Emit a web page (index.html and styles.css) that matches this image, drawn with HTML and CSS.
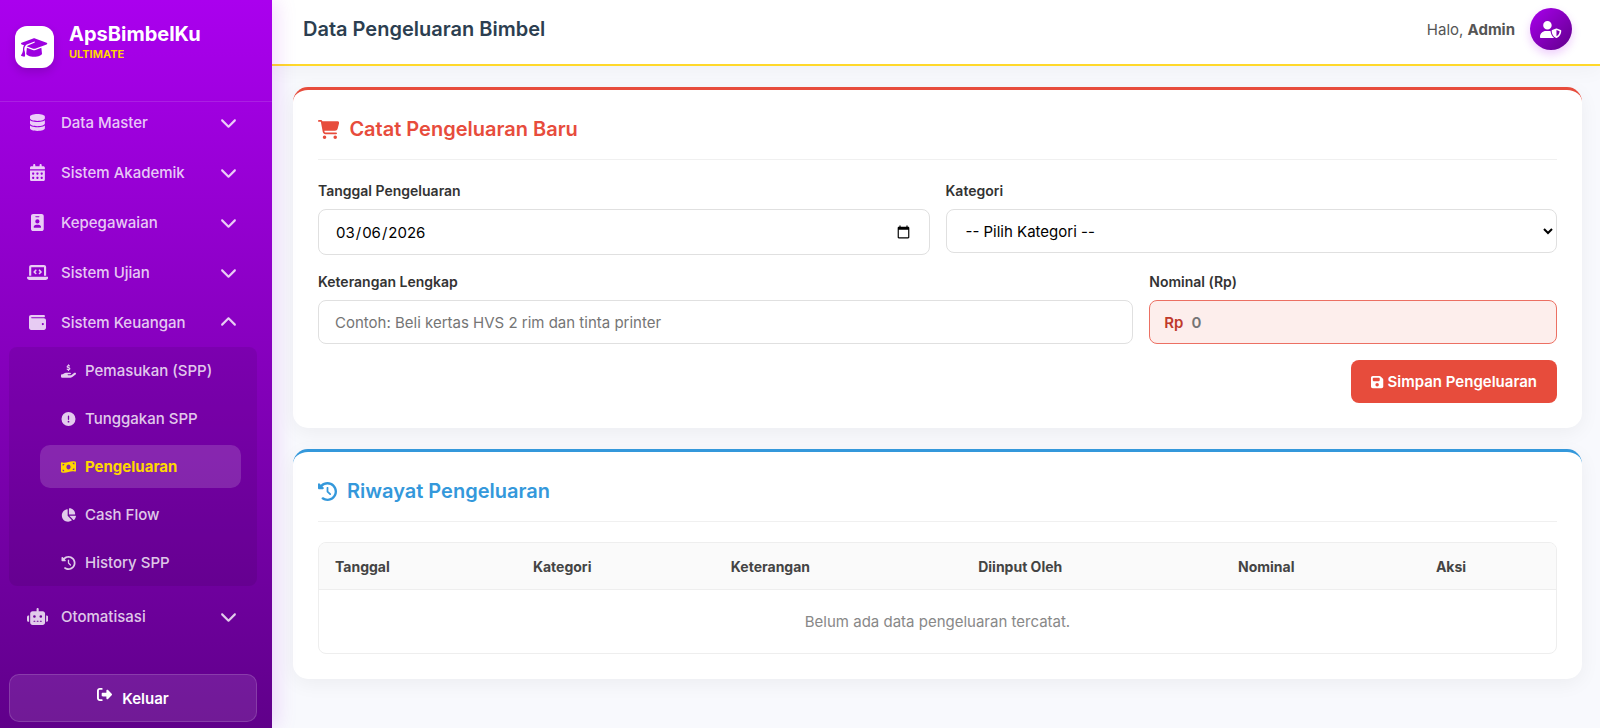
FILE: index.html
```html
<!DOCTYPE html>
<html lang="id">
<head>
    <meta charset="UTF-8">
    <meta name="viewport" content="width=device-width, initial-scale=1.0">
    <title>Data Pengeluaran Bimbel</title>
    <link rel="stylesheet" href="styles.css">
</head>
<body>
    <!-- Sidebar -->
    <aside class="sidebar">
        <div class="sidebar-header">
            <div class="logo-box">
                <svg class="icon" viewBox="0 0 640 512"><path d="M320 32c-8.1 0-16.1 1.4-23.7 4.1L15.8 137.4C6.3 140.9 0 149.9 0 160s6.3 19.1 15.8 22.6l57.9 20.9C57.3 229.3 48 259.8 48 291.9v28.1c0 28.4-10.8 57.7-22.3 80.8c-6.5 13-13.9 25.8-22.5 37.6C0 442.7-.9 448.3 .9 453.4s6 8.9 11.2 10.2l64 16c4.2 1.1 8.7 .3 12.4-2s6.3-6.1 7.1-10.4c8.6-42.8 4.3-81.2-2.1-108.7C90.3 344.3 86 329.8 80 316.5V291.9c0-30.2 10.2-58.7 27.9-81.5c12.9-15.5 29.6-28 49.2-35.7l157-61.7c8.2-3.2 17.5 .8 20.7 9s-.8 17.5-9 20.7l-157 61.7c-12.4 4.9-23.3 12.4-32.2 21.6l159.6 57.6c7.6 2.7 15.6 4.1 23.7 4.1s16.1-1.4 23.7-4.1L624.2 182.6c9.5-3.4 15.8-12.5 15.8-22.6s-6.3-19.1-15.8-22.6L343.7 36.1C336.1 33.4 328.1 32 320 32zM128 408c0 35.3 86 72 192 72s192-36.7 192-72L496.7 262.6 354.5 314c-11.1 4-22.8 6-34.5 6s-23.5-2-34.5-6L143.3 262.6 128 408z"/></svg>
            </div>
            <div class="brand">
                <span class="brand-name">ApsBimbelKu</span>
                <span class="brand-badge">ULTIMATE</span>
            </div>
        </div>

        <nav class="sidebar-menu">
            <button type="button" class="menu-item">
                <span class="menu-icon"><svg class="icon" viewBox="0 0 448 512"><path d="M448 80v48c0 44.2-100.3 80-224 80S0 172.2 0 128V80C0 35.8 100.3 0 224 0S448 35.8 448 80zM393.2 214.7c20.8-7.4 39.9-16.9 54.8-28.6V288c0 44.2-100.3 80-224 80S0 332.2 0 288V186.1c14.9 11.8 34 21.2 54.8 28.6C99.7 230.7 159.5 240 224 240s124.3-9.3 169.2-25.3zM0 346.1c14.9 11.8 34 21.2 54.8 28.6C99.7 390.7 159.5 400 224 400s124.3-9.3 169.2-25.3c20.8-7.4 39.9-16.9 54.8-28.6V432c0 44.2-100.3 80-224 80S0 476.2 0 432V346.1z"/></svg></span>
                Data Master
                <svg class="icon arrow" viewBox="0 0 512 512"><path d="M233.4 406.6c12.5 12.5 32.8 12.5 45.3 0l192-192c12.5-12.5 12.5-32.8 0-45.3s-32.8-12.5-45.3 0L256 338.7 86.6 169.4c-12.5-12.5-32.8-12.5-45.3 0s-12.5 32.8 0 45.3l192 192z"/></svg>
            </button>
            <button type="button" class="menu-item">
                <span class="menu-icon"><svg class="icon" viewBox="0 0 448 512"><path d="M128 0c17.7 0 32 14.3 32 32V64H288V32c0-17.7 14.3-32 32-32s32 14.3 32 32V64h48c26.5 0 48 21.5 48 48v48H0V112C0 85.5 21.5 64 48 64H96V32c0-17.7 14.3-32 32-32zM0 192H448V464c0 26.5-21.5 48-48 48H48c-26.5 0-48-21.5-48-48V192zm64 80v32c0 8.8 7.2 16 16 16h32c8.8 0 16-7.2 16-16V272c0-8.8-7.2-16-16-16H80c-8.8 0-16 7.2-16 16zm128 0v32c0 8.8 7.2 16 16 16h32c8.8 0 16-7.2 16-16V272c0-8.8-7.2-16-16-16H208c-8.8 0-16 7.2-16 16zm144-16c-8.8 0-16 7.2-16 16v32c0 8.8 7.2 16 16 16h32c8.8 0 16-7.2 16-16V272c0-8.8-7.2-16-16-16H336zM64 400v32c0 8.8 7.2 16 16 16h32c8.8 0 16-7.2 16-16V400c0-8.8-7.2-16-16-16H80c-8.8 0-16 7.2-16 16zm144-16c-8.8 0-16 7.2-16 16v32c0 8.8 7.2 16 16 16h32c8.8 0 16-7.2 16-16V400c0-8.8-7.2-16-16-16H208zm112 16v32c0 8.8 7.2 16 16 16h32c8.8 0 16-7.2 16-16V400c0-8.8-7.2-16-16-16H336c-8.8 0-16 7.2-16 16z"/></svg></span>
                Sistem Akademik
                <svg class="icon arrow" viewBox="0 0 512 512"><path d="M233.4 406.6c12.5 12.5 32.8 12.5 45.3 0l192-192c12.5-12.5 12.5-32.8 0-45.3s-32.8-12.5-45.3 0L256 338.7 86.6 169.4c-12.5-12.5-32.8-12.5-45.3 0s-12.5 32.8 0 45.3l192 192z"/></svg>
            </button>
            <button type="button" class="menu-item">
                <span class="menu-icon"><svg class="icon" viewBox="0 0 384 512"><path d="M64 0C28.7 0 0 28.7 0 64V448c0 35.3 28.7 64 64 64H320c35.3 0 64-28.7 64-64V64c0-35.3-28.7-64-64-64H64zm96 320h64c44.2 0 80 35.8 80 80c0 8.8-7.2 16-16 16H96c-8.8 0-16-7.2-16-16c0-44.2 35.8-80 80-80zm-32-96a64 64 0 1 1 128 0 64 64 0 1 1 -128 0zM144 64h96c8.8 0 16 7.2 16 16s-7.2 16-16 16H144c-8.8 0-16-7.2-16-16s7.2-16 16-16z"/></svg></span>
                Kepegawaian
                <svg class="icon arrow" viewBox="0 0 512 512"><path d="M233.4 406.6c12.5 12.5 32.8 12.5 45.3 0l192-192c12.5-12.5 12.5-32.8 0-45.3s-32.8-12.5-45.3 0L256 338.7 86.6 169.4c-12.5-12.5-32.8-12.5-45.3 0s-12.5 32.8 0 45.3l192 192z"/></svg>
            </button>
            <button type="button" class="menu-item">
                <span class="menu-icon"><svg class="icon" viewBox="0 0 640 512"><path d="M64 96c0-35.3 28.7-64 64-64H512c35.3 0 64 28.7 64 64V352H512V96H128V352H64V96zM0 403.2C0 392.6 8.6 384 19.2 384H620.8c10.6 0 19.2 8.6 19.2 19.2c0 42.4-34.4 76.8-76.8 76.8H76.8C34.4 480 0 445.6 0 403.2zM281 209l-31 31 31 31c9.4 9.4 9.4 24.6 0 33.9s-24.6 9.4-33.9 0l-48-48c-9.4-9.4-9.4-24.6 0-33.9l48-48c9.4-9.4 24.6-9.4 33.9 0s9.4 24.6 0 33.9zM393 175l48 48c9.4 9.4 9.4 24.6 0 33.9l-48 48c-9.4 9.4-24.6 9.4-33.9 0s-9.4-24.6 0-33.9l31-31-31-31c-9.4-9.4-9.4-24.6 0-33.9s24.6-9.4 33.9 0z"/></svg></span>
                Sistem Ujian
                <svg class="icon arrow" viewBox="0 0 512 512"><path d="M233.4 406.6c12.5 12.5 32.8 12.5 45.3 0l192-192c12.5-12.5 12.5-32.8 0-45.3s-32.8-12.5-45.3 0L256 338.7 86.6 169.4c-12.5-12.5-32.8-12.5-45.3 0s-12.5 32.8 0 45.3l192 192z"/></svg>
            </button>
            <button type="button" class="menu-item open">
                <span class="menu-icon"><svg class="icon" viewBox="0 0 512 512"><path d="M64 32C28.7 32 0 60.7 0 96V416c0 35.3 28.7 64 64 64H448c35.3 0 64-28.7 64-64V192c0-35.3-28.7-64-64-64H80c-8.8 0-16-7.2-16-16s7.2-16 16-16H448c17.7 0 32-14.3 32-32s-14.3-32-32-32H64zM416 272a32 32 0 1 1 0 64 32 32 0 1 1 0-64z"/></svg></span>
                Sistem Keuangan
                <svg class="icon arrow" viewBox="0 0 512 512"><path d="M233.4 406.6c12.5 12.5 32.8 12.5 45.3 0l192-192c12.5-12.5 12.5-32.8 0-45.3s-32.8-12.5-45.3 0L256 338.7 86.6 169.4c-12.5-12.5-32.8-12.5-45.3 0s-12.5 32.8 0 45.3l192 192z"/></svg>
            </button>

            <div class="submenu">
                <a href="#" class="submenu-item">
                    <svg class="icon" viewBox="0 0 576 512"><path d="M312 24V34.5c6.4 1.2 12.6 2.7 18.2 4.2c12.8 3.4 20.4 16.6 17 29.4s-16.6 20.4-29.4 17c-10.9-2.9-21.1-4.9-30.2-5c-7.3-.1-14.7 1.7-19.4 4.4c-2.1 1.3-3.1 2.4-3.5 3c-.3 .5-.7 1.2-.7 2.8c0 .3 0 .5 0 .6c.2 .2 .9 1.2 3.3 2.6c5.8 3.5 14.4 6.2 27.4 10.1l.9 .3c11.1 3.3 25.9 7.8 37.9 15.3c13.7 8.6 26.1 22.9 26.4 44.9c.3 22.5-11.4 38.9-26.7 48.5c-6.7 4.1-13.9 7-21.3 8.8V232c0 13.3-10.7 24-24 24s-24-10.7-24-24V220.6c-9.5-2.3-18.2-5.3-25.6-7.8c-2.1-.7-4.1-1.4-6-2c-12.6-4.2-19.4-17.8-15.2-30.4s17.8-19.4 30.4-15.2c2.6 .9 5 1.7 7.3 2.5c13.6 4.6 23.4 7.9 33.9 8.3c8 .3 15.1-1.6 19.2-4.1c1.9-1.2 2.8-2.2 3.2-2.9c.4-.6 .9-1.8 .8-4.1l0-.2c0-1 0-2.1-4-4.6c-5.7-3.6-14.3-6.4-27.1-10.3l-1.9-.6c-10.8-3.2-25-7.5-36.4-14.4c-13.5-8.1-26.5-22-26.6-44.1c-.1-22.9 12.9-38.6 27.7-47.4c6.4-3.8 13.3-6.4 20.2-8.2V24c0-13.3 10.7-24 24-24s24 10.7 24 24zM568.2 336.3c13.1 17.8 9.3 42.8-8.5 55.9L433.1 485.5c-23.4 17.2-51.6 26.5-80.7 26.5H192 32c-17.7 0-32-14.3-32-32V416c0-17.7 14.3-32 32-32H68.8l44.9-36c22.7-18.2 50.9-28 80-28H272h16 64c17.7 0 32 14.3 32 32s-14.3 32-32 32H288 272c-8.8 0-16 7.2-16 16s7.2 16 16 16H392.6l119.7-88.2c17.8-13.1 42.8-9.3 55.9 8.5z"/></svg>
                    Pemasukan (SPP)
                </a>
                <a href="#" class="submenu-item">
                    <svg class="icon" viewBox="0 0 512 512"><path d="M256 512A256 256 0 1 0 256 0a256 256 0 1 0 0 512zm0-384c13.3 0 24 10.7 24 24V264c0 13.3-10.7 24-24 24s-24-10.7-24-24V152c0-13.3 10.7-24 24-24zM224 352a32 32 0 1 1 64 0 32 32 0 1 1 -64 0z"/></svg>
                    Tunggakan SPP
                </a>
                <a href="#" class="submenu-item active">
                    <svg class="icon" viewBox="0 0 576 512"><path d="M0 112.5V422.3c0 18 10.1 35 27 41.3c87 32.5 174 10.3 261-11.9c79.8-20.3 159.6-40.7 239.3-18.9c23 6.3 48.7-9.5 48.7-33.4V89.7c0-18-10.1-35-27-41.3C462 15.9 375 38.1 288 60.3C208.2 80.6 128.4 100.9 48.7 79.1C25.6 72.8 0 88.6 0 112.5zM288 352c-44.2 0-80-43-80-96s35.8-96 80-96s80 43 80 96s-35.8 96-80 96zM64 352c35.3 0 64 28.7 64 64H64V352zm64-208c0 35.3-28.7 64-64 64V144h64zM512 304v64H448c0-35.3 28.7-64 64-64zM448 96h64v64c-35.3 0-64-28.7-64-64z"/></svg>
                    Pengeluaran
                </a>
                <a href="#" class="submenu-item">
                    <svg class="icon" viewBox="0 0 576 512"><path d="M304 240V16.6c0-9 7-16.6 16-16.6C443.7 0 544 100.3 544 224c0 9-7.6 16-16.6 16H304zM32 272C32 150.7 122.1 50.3 239 34.3c9.2-1.3 17 6.1 17 15.4V288L412.5 444.5c6.7 6.7 6.2 17.7-1.5 23.1C371.8 495.6 323.8 512 272 512C139.5 512 32 404.6 32 272zm526.4 16c9.3 0 16.6 7.8 15.4 17c-7.7 55.9-34.6 105.6-73.9 142.3c-6 5.6-15.4 5.2-21.2-.7L320 288H558.4z"/></svg>
                    Cash Flow
                </a>
                <a href="#" class="submenu-item">
                    <svg class="icon" viewBox="0 0 512 512"><path d="M75 75L41 41C25.9 25.9 0 36.6 0 57.9V168c0 13.3 10.7 24 24 24H134.1c21.4 0 32.1-25.9 17-41l-30.8-30.8C155 85.5 203 64 256 64c106 0 192 86 192 192s-86 192-192 192c-40.8 0-78.6-12.7-109.7-34.4c-14.5-10.1-34.4-6.6-44.6 7.9s-6.6 34.4 7.9 44.6C151.2 495 201.7 512 256 512c141.4 0 256-114.6 256-256S397.4 0 256 0C185.3 0 121.3 28.7 75 75zm181 53c-13.3 0-24 10.7-24 24V256c0 6.4 2.5 12.5 7 17l72 72c9.4 9.4 24.6 9.4 33.9 0s9.4-24.6 0-33.9l-65-65V152c0-13.3-10.7-24-24-24z"/></svg>
                    History SPP
                </a>
            </div>

            <button type="button" class="menu-item">
                <span class="menu-icon"><svg class="icon" viewBox="0 0 640 512"><path d="M320 0c17.7 0 32 14.3 32 32V96H472c39.8 0 72 32.2 72 72V440c0 39.8-32.2 72-72 72H168c-39.8 0-72-32.2-72-72V168c0-39.8 32.2-72 72-72H288V32c0-17.7 14.3-32 32-32zM208 384c-8.8 0-16 7.2-16 16s7.2 16 16 16h32c8.8 0 16-7.2 16-16s-7.2-16-16-16H208zm96 0c-8.8 0-16 7.2-16 16s7.2 16 16 16h32c8.8 0 16-7.2 16-16s-7.2-16-16-16H304zm96 0c-8.8 0-16 7.2-16 16s7.2 16 16 16h32c8.8 0 16-7.2 16-16s-7.2-16-16-16H400zM264 256a40 40 0 1 0 -80 0 40 40 0 1 0 80 0zm152 40a40 40 0 1 0 0-80 40 40 0 1 0 0 80zM48 224H64V416H48c-26.5 0-48-21.5-48-48V272c0-26.5 21.5-48 48-48zm544 0c26.5 0 48 21.5 48 48v96c0 26.5-21.5 48-48 48H576V224h16z"/></svg></span>
                Otomatisasi
                <svg class="icon arrow" viewBox="0 0 512 512"><path d="M233.4 406.6c12.5 12.5 32.8 12.5 45.3 0l192-192c12.5-12.5 12.5-32.8 0-45.3s-32.8-12.5-45.3 0L256 338.7 86.6 169.4c-12.5-12.5-32.8-12.5-45.3 0s-12.5 32.8 0 45.3l192 192z"/></svg>
            </button>
        </nav>

        <div class="sidebar-footer">
            <button type="button" class="btn-logout">
                <svg class="icon" viewBox="0 0 512 512"><path d="M377.9 105.9L500.7 228.7c7.2 7.2 11.3 17.1 11.3 27.3s-4.1 20.1-11.3 27.3L377.9 406.1c-6.4 6.4-15 9.9-24 9.9c-18.7 0-33.9-15.2-33.9-33.9l0-62.1-128 0c-17.7 0-32-14.3-32-32l0-64c0-17.7 14.3-32 32-32l128 0 0-62.1c0-18.7 15.2-33.9 33.9-33.9c9 0 17.6 3.6 24 9.9zM160 96L96 96c-17.7 0-32 14.3-32 32l0 256c0 17.7 14.3 32 32 32l64 0c17.7 0 32 14.3 32 32s-14.3 32-32 32l-64 0c-53 0-96-43-96-96L0 128C0 75 43 32 96 32l64 0c17.7 0 32 14.3 32 32s-14.3 32-32 32z"/></svg>
                Keluar
            </button>
        </div>
    </aside>

    <!-- Main content -->
    <div class="main">
        <header class="topbar">
            <h1 class="page-title">Data Pengeluaran Bimbel</h1>
            <div class="user-info">
                <span>Halo, <b>Admin</b></span>
                <div class="avatar">
                    <svg class="icon" viewBox="0 0 640 512"><path d="M224 256A128 128 0 1 0 224 0a128 128 0 1 0 0 256zm-45.7 48C79.8 304 0 383.8 0 482.3C0 498.7 13.3 512 29.7 512H418.3c1.8 0 3.5-.2 5.3-.5c-76.3-55.1-99.8-141-103.1-200.2c-16.1-4.8-33.1-7.3-50.7-7.3H178.3zm308.8-78.3l-120 48C358 277.4 352 286.2 352 296c0 63.3 25.9 168.8 134.8 214.2c5.9 2.5 12.6 2.5 18.5 0C614.1 464.8 640 359.3 640 296c0-9.8-6-18.6-15.1-22.3l-120-48c-5.7-2.3-12.1-2.3-17.8 0zM591.4 312c-3.9 50.7-27.2 116.7-95.4 149.7V273.8L591.4 312z"/></svg>
                </div>
            </div>
        </header>

        <main class="content">
            <section class="card card-red">
                <h2 class="card-title">
                    <svg class="icon" viewBox="0 0 576 512"><path d="M0 24C0 10.7 10.7 0 24 0H69.5c22 0 41.5 12.8 50.6 32h411c26.3 0 45.5 25 38.6 50.4l-41 152.3c-8.5 31.4-37 53.3-69.5 53.3H170.7l5.4 28.5c2.2 11.3 12.1 19.5 23.6 19.5H488c13.3 0 24 10.7 24 24s-10.7 24-24 24H199.7c-34.6 0-64.3-24.6-70.7-58.5L77.4 54.5c-.7-3.8-4-6.5-7.9-6.5H24C10.7 48 0 37.3 0 24zM128 464a48 48 0 1 1 96 0 48 48 0 1 1 -96 0zm336-48a48 48 0 1 1 0 96 48 48 0 1 1 0-96z"/></svg>
                    Catat Pengeluaran Baru
                </h2>
                <form class="expense-form">
                    <div class="form-row">
                        <div class="form-group">
                            <label for="tanggal">Tanggal Pengeluaran</label>
                            <input type="date" id="tanggal" class="form-control" value="2026-03-06">
                        </div>
                        <div class="form-group">
                            <label for="kategori">Kategori</label>
                            <select id="kategori" class="form-control">
                                <option>-- Pilih Kategori --</option>
                            </select>
                        </div>
                    </div>
                    <div class="form-row row-wide">
                        <div class="form-group">
                            <label for="keterangan">Keterangan Lengkap</label>
                            <input type="text" id="keterangan" class="form-control" placeholder="Contoh: Beli kertas HVS 2 rim dan tinta printer">
                        </div>
                        <div class="form-group">
                            <label for="nominal">Nominal (Rp)</label>
                            <div class="input-rp">
                                <span>Rp</span>
                                <input type="text" id="nominal" placeholder="0">
                            </div>
                        </div>
                    </div>
                    <button type="button" class="btn-save">
                        <svg class="icon" viewBox="0 0 448 512"><path d="M64 32C28.7 32 0 60.7 0 96V416c0 35.3 28.7 64 64 64H384c35.3 0 64-28.7 64-64V173.3c0-17-6.7-33.3-18.7-45.3L352 50.7C340 38.7 323.7 32 306.7 32H64zm0 96c0-17.7 14.3-32 32-32H288c17.7 0 32 14.3 32 32v64c0 17.7-14.3 32-32 32H96c-17.7 0-32-14.3-32-32V128zM224 288a64 64 0 1 1 0 128 64 64 0 1 1 0-128z"/></svg>
                        Simpan Pengeluaran
                    </button>
                </form>
            </section>

            <section class="card card-blue">
                <h2 class="card-title">
                    <svg class="icon" viewBox="0 0 512 512"><path d="M75 75L41 41C25.9 25.9 0 36.6 0 57.9V168c0 13.3 10.7 24 24 24H134.1c21.4 0 32.1-25.9 17-41l-30.8-30.8C155 85.5 203 64 256 64c106 0 192 86 192 192s-86 192-192 192c-40.8 0-78.6-12.7-109.7-34.4c-14.5-10.1-34.4-6.6-44.6 7.9s-6.6 34.4 7.9 44.6C151.2 495 201.7 512 256 512c141.4 0 256-114.6 256-256S397.4 0 256 0C185.3 0 121.3 28.7 75 75zm181 53c-13.3 0-24 10.7-24 24V256c0 6.4 2.5 12.5 7 17l72 72c9.4 9.4 24.6 9.4 33.9 0s9.4-24.6 0-33.9l-65-65V152c0-13.3-10.7-24-24-24z"/></svg>
                    Riwayat Pengeluaran
                </h2>
                <div class="table-wrap">
                    <table class="data-table">
                        <thead>
                            <tr>
                                <th class="col-tanggal">Tanggal</th>
                                <th class="col-kategori">Kategori</th>
                                <th class="col-keterangan">Keterangan</th>
                                <th class="col-oleh">Diinput Oleh</th>
                                <th class="col-nominal">Nominal</th>
                                <th class="col-aksi">Aksi</th>
                            </tr>
                        </thead>
                        <tbody>
                            <tr>
                                <td colspan="6" class="empty">Belum ada data pengeluaran tercatat.</td>
                            </tr>
                        </tbody>
                    </table>
                </div>
            </section>
        </main>
    </div>
</body>
</html>
```
FILE: styles.css
```css
* {
    box-sizing: border-box;
}

body {
    margin: 0;
    display: flex;
    min-height: 100vh;
    background: #f8f9fd;
    color: #333;
    font-family: Inter, "Open Sans", sans-serif;
    font-size: 15px;
}

button,
input,
select {
    font-family: inherit;
}

.icon {
    display: block;
    height: 17px;
    fill: currentColor;
    flex-shrink: 0;
}

/* Sidebar */
.sidebar {
    width: 272px;
    height: 100vh;
    flex-shrink: 0;
    position: sticky;
    top: 0;
    z-index: 10;
    display: flex;
    flex-direction: column;
    background: linear-gradient(180deg, #aa00ee 0%, #60008a 100%);
    box-shadow: 4px 0 20px rgba(160, 0, 230, 0.15);
}

.sidebar-header {
    display: flex;
    align-items: flex-start;
    gap: 15px;
    height: 102px;
    padding: 22px 15px;
    border-bottom: 1px solid rgba(255, 255, 255, 0.12);
}

.logo-box {
    width: 39px;
    height: 42px;
    margin-top: 4px;
    border-radius: 12px;
    background: #fff;
    color: #9d00e0;
    display: flex;
    align-items: center;
    justify-content: center;
    box-shadow: 0 4px 10px rgba(0, 0, 0, 0.15);
}

.logo-box .icon {
    height: 21px;
}

.brand {
    display: flex;
    flex-direction: column;
    color: #fff;
}

.brand-name {
    font-size: 20px;
    line-height: 24px;
    font-weight: 700;
}

.brand-badge {
    font-size: 11px;
    line-height: 17px;
    font-weight: 700;
    color: #ffd700;
}

.sidebar-menu {
    flex: 1;
    padding: 0 15px 0 9px;
}

.menu-item {
    width: 100%;
    height: 41px;
    margin-bottom: 9px;
    padding: 0 20px 0 17px;
    border: 0;
    background: none;
    display: flex;
    align-items: center;
    gap: 12px;
    color: rgba(255, 255, 255, 0.8);
    font-size: 15px;
    font-weight: 500;
    cursor: pointer;
}

.menu-icon {
    width: 23px;
    display: flex;
    justify-content: center;
}

.menu-item .arrow {
    margin-left: auto;
}

.menu-item.open {
    margin-bottom: 4px;
}

.menu-item.open .arrow {
    transform: rotate(180deg);
}

.submenu {
    display: flex;
    flex-direction: column;
    gap: 5px;
    margin-bottom: 10px;
    padding: 2px 16px 2px 31px;
    border-radius: 8px;
    background: rgba(0, 0, 0, 0.08);
}

.submenu-item {
    display: flex;
    align-items: center;
    gap: 9px;
    height: 43px;
    padding: 0 21px;
    border-radius: 10px;
    color: rgba(255, 255, 255, 0.8);
    font-size: 15px;
    font-weight: 500;
    text-decoration: none;
}

.submenu-item .icon {
    width: 15px;
    height: 14px;
}

.submenu-item.active {
    background: rgba(255, 255, 255, 0.15);
    color: #ffd700;
    font-weight: 700;
}

.sidebar-footer {
    padding: 0 15px 6px 9px;
}

.btn-logout {
    width: 100%;
    height: 48px;
    border: 1px solid rgba(255, 255, 255, 0.15);
    border-radius: 10px;
    background: rgba(255, 255, 255, 0.1);
    color: #fff;
    display: flex;
    align-items: center;
    justify-content: center;
    gap: 10px;
    font-size: 15px;
    font-weight: 600;
    cursor: pointer;
}

.btn-logout .icon {
    height: 15px;
    margin-bottom: 7px;
}

/* Main content */
.main {
    flex: 1;
    min-width: 0;
}

.topbar {
    display: flex;
    align-items: center;
    justify-content: space-between;
    padding: 8px 28px 14px 31px;
    background: #fff;
    border-bottom: 2px solid #ffd82a;
    box-shadow: 0 4px 20px rgba(0, 0, 0, 0.04);
}

.page-title {
    margin: 0;
    color: #2c3e50;
    font-size: 20px;
    font-weight: 600;
}

.user-info {
    display: flex;
    align-items: center;
    gap: 15px;
    color: #555;
}

.avatar {
    width: 42px;
    height: 42px;
    border-radius: 50%;
    background: linear-gradient(135deg, #aa00ee, #60008a);
    color: #fff;
    display: flex;
    align-items: center;
    justify-content: center;
    box-shadow: 0 4px 10px rgba(170, 0, 238, 0.2);
}

.content {
    display: flex;
    flex-direction: column;
    gap: 21px;
    padding: 21px 18px 21px 21px;
}

.card {
    padding: 25px;
    border-top: 3px solid;
    border-radius: 15px;
    background: #fff;
    box-shadow: 0 5px 20px rgba(0, 0, 0, 0.05);
}

.card-red {
    border-top-color: #e74c3c;
}

.card-blue {
    border-top-color: #3498db;
}

.card-title {
    display: flex;
    align-items: center;
    gap: 10px;
    margin: 0 0 20px;
    padding-bottom: 15px;
    border-bottom: 1px solid #f0f0f0;
    font-size: 20px;
    line-height: 29px;
    font-weight: 600;
}

.card-title .icon {
    height: 19px;
}

.card-red .card-title {
    color: #e74c3c;
}

.card-blue .card-title {
    color: #3498db;
}

.expense-form {
    display: flex;
    flex-direction: column;
    gap: 16px;
}

.form-row {
    display: grid;
    grid-template-columns: 1fr 1fr;
    gap: 16px;
    align-items: start;
}

.row-wide {
    grid-template-columns: 2fr 1fr;
}

.form-group {
    display: flex;
    flex-direction: column;
    gap: 8px;
}

.form-group label {
    font-size: 14px;
    line-height: 21px;
    font-weight: 600;
}

.form-control {
    width: 100%;
    height: 44px;
    padding: 0 16px;
    border: 1px solid #e0e0e0;
    border-radius: 8px;
    background: #fff;
    color: #000;
    font-size: 15px;
}

input[type="date"].form-control {
    height: 46px;
}

select.form-control {
    padding: 0 0 0 15px;
}

.form-control::placeholder {
    color: #757575;
}

.input-rp {
    display: flex;
    align-items: center;
    gap: 8px;
    height: 44px;
    padding: 0 14px;
    border: 1px solid #ec7063;
    border-radius: 8px;
    background: #fdeeec;
    color: #c0392b;
    font-weight: 600;
}

.input-rp input {
    flex: 1;
    min-width: 0;
    padding: 0;
    border: 0;
    outline: 0;
    background: none;
    font-size: 15px;
    font-weight: 600;
}

.btn-save {
    align-self: flex-end;
    display: flex;
    align-items: center;
    gap: 4px;
    height: 43px;
    padding: 0 20px;
    border: 0;
    border-radius: 8px;
    background: #e74c3c;
    color: #fff;
    font-size: 15px;
    font-weight: 600;
    cursor: pointer;
}

.btn-save .icon {
    height: 14px;
}

/* Table */
.table-wrap {
    overflow: hidden;
    border: 1px solid #eee;
    border-radius: 8px;
}

.data-table {
    width: 100%;
    table-layout: fixed;
    border-collapse: collapse;
    font-size: 14px;
    line-height: 21px;
}

.data-table th {
    padding: 13px 16px 12px;
    border-bottom: 1px solid #eee;
    background: #fafafa;
    color: #444;
    font-weight: 700;
    text-align: left;
}

.data-table .empty {
    padding: 21px 16px;
    color: #888;
    font-size: 15px;
    text-align: center;
}

.col-tanggal,
.col-kategori,
.col-nominal {
    width: 16%;
}

.col-keterangan {
    width: 20%;
}

.col-oleh {
    width: 21%;
}

.col-aksi {
    width: 11%;
}
```
